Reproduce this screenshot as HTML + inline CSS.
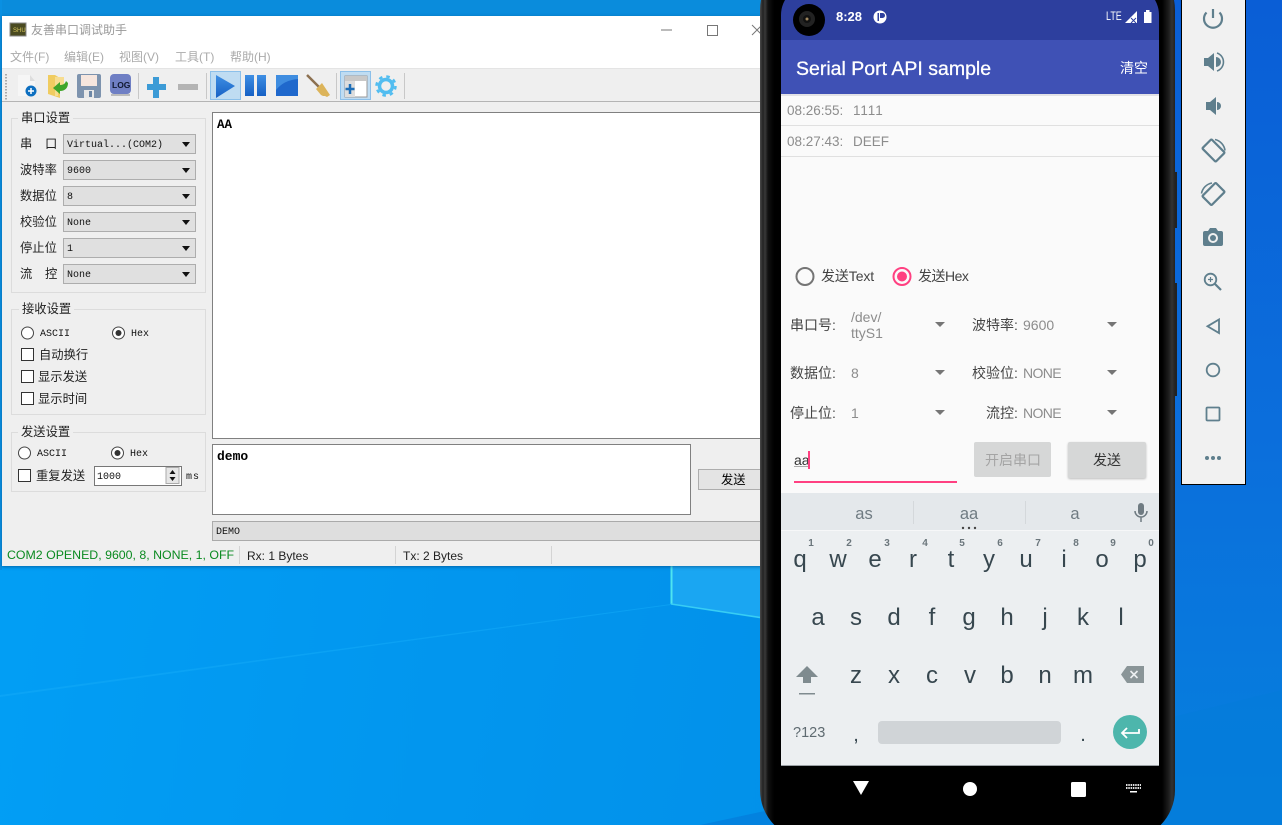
<!DOCTYPE html>
<html><head><meta charset="utf-8"><style>
*{box-sizing:border-box}
html,body{margin:0;padding:0;width:1282px;height:825px;overflow:hidden}
body{position:relative;font-family:"Liberation Sans","Noto Sans CJK SC",sans-serif;background:linear-gradient(100deg,#02a0f6 0,#0296ee 40%,#028fe8 75%)}
div,span,svg{position:absolute}
.t{white-space:nowrap;line-height:16px}
.cn{font-size:12.3px;color:#222;font-family:"Liberation Sans","Noto Sans CJK SC",sans-serif}
.m{font-family:"Liberation Mono","Noto Sans CJK SC",monospace;font-size:10px;color:#111}
.combo{left:63px;width:133px;height:20px;background:#e0e0e0;border:1px solid #adadad}
.combo span{left:3px;top:1px}
.combo i{position:absolute;right:5px;top:7px;width:0;height:0;border-left:4px solid transparent;border-right:4px solid transparent;border-top:5px solid #111}
.grp{left:11px;width:195px;border:1px solid #dcdcdc}
.gt{background:#efefef;padding:0 3px;font-size:12.3px;color:#222;white-space:nowrap;line-height:16px}
.cb{width:13px;height:13px;border:1px solid #333;background:#fff}
.k{font-size:24px;color:#37474f;transform:translateX(-50%);line-height:26px;white-space:nowrap}
.d{font-size:10px;color:#6b767c;transform:translateX(-50%);line-height:12px;font-weight:bold}
.lb{font-size:14px;color:#444;line-height:18px;white-space:nowrap}
.v{font-size:14px;color:#8c8c8c;line-height:16px;white-space:nowrap}
.ar{width:0;height:0;border-left:5px solid transparent;border-right:5px solid transparent;border-top:5px solid #757575}
</style></head><body>

<svg style="left:0;top:0" width="1282" height="825" viewBox="0 0 1282 825">
<defs>
<linearGradient id="bgR" x1="0" y1="0" x2="0" y2="1"><stop offset="0" stop-color="#0a5ed6"/><stop offset=".55" stop-color="#0b6fdc"/><stop offset="1" stop-color="#0581de"/></linearGradient>
</defs>
<rect x="0" y="0" width="770" height="30" fill="#0a8cdc"/>
<rect x="0" y="0" width="2" height="570" fill="#0a90e2"/>
<rect x="1160" y="0" width="122" height="825" fill="url(#bgR)"/>
<polygon points="700,825 1282,825 1282,690 1000,760" fill="#047cda" opacity=".7"/>
<polygon points="671,566 770,566 770,619 671,604" fill="#1aa6f2"/>
<polygon points="0,695 671,604 671,605 0,697" fill="#12a8f6" opacity=".6"/>
<line x1="671.5" y1="566" x2="671.5" y2="604" stroke="#4fe4f0" stroke-width="2"/>
<line x1="671" y1="604" x2="770" y2="619" stroke="#38cdf4" stroke-width="1.500"/>
</svg>

<!-- Window -->
<div style="left:2px;top:16px;width:762px;height:550px;background:#efefef;box-shadow:0 1px 3px rgba(0,50,100,.5)">
<div style="left:0;top:0;width:762px;height:52px;background:#fff"></div>
<div style="left:0;top:52px;width:762px;height:1px;background:#e4e4e4"></div>
<div style="left:0;top:85px;width:762px;height:1px;background:#b4b4b4"></div>
</div>
<svg style="left:0;top:0" width="770" height="110" viewBox="0 0 770 110">
<defs>
<linearGradient id="bl" x1="0" y1="0" x2="0" y2="1"><stop offset="0" stop-color="#3f8fe4"/><stop offset="1" stop-color="#1660c4"/></linearGradient>
</defs>
<rect x="10" y="23" width="16" height="13" fill="#4a4a20" stroke="#888" />
<text x="13" y="32" font-size="6" fill="#d8c860" font-family="Liberation Sans">SHU</text>
<line x1="661" y1="30" x2="672" y2="30" stroke="#777"/>
<rect x="707.500" y="25.500" width="10" height="10" fill="none" stroke="#777"/>
<path d="M752 25l10 10M762 25l-10 10" stroke="#777"/>
<path d="M6 74v26" stroke="#aaa" stroke-width="2" stroke-dasharray="1.500 1.500"/>
<path d="M138.500 73v26M206.500 73v26M336.500 73v26M404.500 73v26" stroke="#c8c8c8"/>
<!-- new doc -->
<path d="M18 75h12l5 6v15H18z" fill="#f6f6f6"/><path d="M30 75l5 6h-5z" fill="#ddd"/>
<circle cx="31" cy="91" r="5.500" fill="#0d6fc0"/><path d="M31 88v6M28 91h6" stroke="#fff" stroke-width="1.500"/>
<!-- folder -->
<path d="M48 75h7l5 3v20l-12-4z" fill="#f0cc60"/><path d="M55 77h9v8l-6 4v7h-3z" fill="#f7dd90"/>
<path d="M68 83c0 5-3 8-8 8v3l-7-6 7-6v3c3 0 5-1 6-4z" fill="#3fa52a"/>
<!-- save -->
<rect x="77" y="74" width="24" height="24" rx="2" fill="#7d93ae"/><rect x="81" y="75" width="16" height="11" fill="#f6e6de"/><rect x="84" y="90" width="10" height="8" fill="#e8e8e8"/><rect x="89" y="91" width="3" height="6" fill="#6d87a6"/>
<!-- log -->
<rect x="110" y="74" width="21" height="20" rx="4" fill="#6f7fc4"/><rect x="111" y="94" width="19" height="2" fill="#bbb"/>
<text x="112" y="88" font-size="8.500" font-weight="bold" fill="#101830" font-family="Liberation Sans">LOG</text>
<!-- plus -->
<path d="M153 77h6v7h7v6h-7v8h-6v-8h-6v-6h6z" fill="#3c9bd6"/>
<rect x="178" y="84" width="20" height="6" fill="#b4b4b4"/>
<!-- hl -->
<rect x="210.500" y="71.500" width="30" height="28" fill="#bfdcf2" stroke="#8cc0ea"/>
<path d="M216 75l19 11-19 12z" fill="url(#bl)"/>
<rect x="245" y="75" width="9" height="21" fill="url(#bl)"/><rect x="257" y="75" width="9" height="21" fill="url(#bl)"/>
<rect x="276" y="75" width="22" height="21" fill="#1f68cc"/><path d="M276 90q8-10 22-11V75h-22z" fill="#3f8de0"/>
<!-- broom -->
<path d="M307 75l13 13" stroke="#8c7050" stroke-width="2.500"/><path d="M316 89l6-6 8 12-3 2-2-1-2 0-2-1z" fill="#dcb45a"/>
<!-- window add -->
<rect x="340.500" y="71.500" width="30" height="28" fill="#bfdcf2" stroke="#8cc0ea"/>
<rect x="345" y="76" width="22" height="21" fill="#fff" stroke="#999"/><rect x="345" y="76" width="22" height="5" fill="#c8c8c8"/><rect x="345" y="81" width="10" height="16" fill="#ddd"/>
<path d="M350 84v10M345.500 89h9" stroke="#1e6fb8" stroke-width="2.500"/>
<!-- gear -->
<circle cx="386" cy="86" r="6.500" fill="none" stroke="#52bdf0" stroke-width="3.500"/>
<circle cx="386" cy="86" r="9.500" fill="none" stroke="#52bdf0" stroke-width="2.500" stroke-dasharray="3.500 3.960"/>
</svg>
<span class="t" style="left:31px;top:22px;font-size:12px;color:#999">友善串口调试助手</span>
<span class="t" style="left:10px;top:49px;font-size:12px;color:#aaa">文件(F)</span>
<span class="t" style="left:64px;top:49px;font-size:12px;color:#aaa">编辑(E)</span>
<span class="t" style="left:119px;top:49px;font-size:12px;color:#aaa">视图(V)</span>
<span class="t" style="left:175px;top:49px;font-size:12px;color:#aaa">工具(T)</span>
<span class="t" style="left:230px;top:49px;font-size:12px;color:#aaa">帮助(H)</span>

<!-- serial group -->
<div class="grp" style="top:118px;height:175px"></div>
<span class="gt" style="left:18px;top:110px">串口设置</span>
<span class="t cn" style="left:20px;top:136px">串</span><span class="t cn" style="left:45px;top:136px">口</span>
<span class="t cn" style="left:20px;top:162px">波特率</span>
<span class="t cn" style="left:20px;top:188px">数据位</span>
<span class="t cn" style="left:20px;top:214px">校验位</span>
<span class="t cn" style="left:20px;top:240px">停止位</span>
<span class="t cn" style="left:20px;top:266px">流</span><span class="t cn" style="left:45px;top:266px">控</span>
<div class="combo" style="top:134px"><span class="t m" style="top:1px">Virtual...(COM2)</span><i></i></div>
<div class="combo" style="top:160px"><span class="t m" style="top:1px">9600</span><i></i></div>
<div class="combo" style="top:186px"><span class="t m" style="top:1px">8</span><i></i></div>
<div class="combo" style="top:212px"><span class="t m" style="top:1px">None</span><i></i></div>
<div class="combo" style="top:238px"><span class="t m" style="top:1px">1</span><i></i></div>
<div class="combo" style="top:264px"><span class="t m" style="top:1px">None</span><i></i></div>
<style>.combo span.m{top:3px!important;left:3px}</style>

<!-- receive group -->
<div class="grp" style="top:309px;height:106px"></div>
<span class="gt" style="left:19px;top:301px">接收设置</span>
<svg style="left:0;top:320px" width="210" height="150" viewBox="0 320 210 150">
<circle cx="27.500" cy="333" r="6" fill="#fff" stroke="#444"/>
<circle cx="118.500" cy="333" r="6" fill="#fff" stroke="#444"/><circle cx="118.500" cy="333" r="3" fill="#333"/>
<circle cx="24.500" cy="453" r="6" fill="#fff" stroke="#444"/>
<circle cx="117.500" cy="453" r="6" fill="#fff" stroke="#444"/><circle cx="117.500" cy="453" r="3" fill="#333"/>
</svg>
<span class="t m" style="left:40px;top:327px">ASCII</span>
<span class="t m" style="left:131px;top:327px">Hex</span>
<div class="cb" style="left:21px;top:348px"></div><span class="t cn" style="left:39px;top:347px">自动换行</span>
<div class="cb" style="left:21px;top:370px"></div><span class="t cn" style="left:38px;top:369px">显示发送</span>
<div class="cb" style="left:21px;top:392px"></div><span class="t cn" style="left:38px;top:391px">显示时间</span>

<!-- send group -->
<div class="grp" style="top:432px;height:60px"></div>
<span class="gt" style="left:18px;top:424px">发送设置</span>
<span class="t m" style="left:37px;top:447px">ASCII</span>
<span class="t m" style="left:130px;top:447px">Hex</span>
<div class="cb" style="left:18px;top:469px"></div><span class="t cn" style="left:36px;top:468px">重复发送</span>
<div style="left:94px;top:466px;width:88px;height:20px;background:#fff;border:1px solid #777"></div>
<span class="t m" style="left:97px;top:470px">1000</span>
<svg style="left:165px;top:467px" width="16" height="18"><rect x="1" y="0.500" width="13" height="16" fill="#e6e6e6" stroke="#aaa"/><path d="M7.500 3l3 4h-6zM7.500 14l3-4h-6z" fill="#111"/></svg>
<span class="t m" style="left:186px;top:470px;letter-spacing:1px">ms</span>

<!-- text areas -->
<div style="left:212px;top:112px;width:560px;height:327px;background:#fff;border:1px solid #808080"></div>
<span class="t" style="left:217px;top:117px;font:bold 12.500px/16px 'Liberation Mono',monospace;color:#000">AA</span>
<div style="left:212px;top:444px;width:479px;height:71px;background:#fff;border:1px solid #808080"></div>
<span class="t" style="left:217px;top:449px;font:bold 13px/16px 'Liberation Mono',monospace;color:#000">demo</span>
<div style="left:698px;top:469px;width:70px;height:21px;background:#e4e4e4;border:1px solid #adadad"></div>
<span class="t cn" style="left:721px;top:472px;color:#000">发送</span>
<div style="left:212px;top:521px;width:560px;height:20px;background:#dedede;border:1px solid #aaa"></div>
<span class="t m" style="left:216px;top:525px">DEMO</span>

<!-- status -->
<span class="t" style="left:7px;top:547px;font-size:12.350px;color:#0a8a20">COM2 OPENED, 9600, 8, NONE, 1, OFF</span>
<div style="left:239px;top:546px;width:1px;height:18px;background:#d4d4d4"></div>
<span class="t" style="left:247px;top:548px;font-size:12px;color:#222">Rx: 1 Bytes</span>
<div style="left:395px;top:546px;width:1px;height:18px;background:#d4d4d4"></div>
<span class="t" style="left:403px;top:548px;font-size:12px;color:#222">Tx: 2 Bytes</span>
<div style="left:551px;top:546px;width:1px;height:18px;background:#d4d4d4"></div>

<!-- Phone -->
<div style="left:1175px;top:172px;width:2px;height:56px;background:#222"></div>
<div style="left:1175px;top:283px;width:2px;height:113px;background:#222"></div>
<div style="left:760px;top:-40px;width:415px;height:880px;border-radius:50px;background:linear-gradient(90deg,#4a4a4a 0,#222 3px,#3a3a3a 5px,#111 8px,#000 14px,#000 402px,#1a1a1a 408px,#333 412px,#222 415px)"></div>
<div style="left:781px;top:-15px;width:378px;height:827px;background:#000;border-radius:30px 30px 34px 34px;overflow:hidden">
  <div style="left:0;top:0;width:378px;height:55px;background:#2d3f9e"></div>
  <div style="left:0;top:55px;width:378px;height:54px;background:#3f51b5"></div>
  <div style="left:0;top:109px;width:378px;height:399px;background:#fafafa"></div>
  <div style="left:0;top:109px;width:378px;height:2px;background:#e2e2e6"></div>
  <div style="left:0;top:140px;width:378px;height:1px;background:#e0e0e0"></div>
  <div style="left:0;top:171px;width:378px;height:1px;background:#e0e0e0"></div>
  <div style="left:0;top:508px;width:378px;height:37px;background:#e4e8eb"></div>
  <div style="left:0;top:545px;width:378px;height:236px;background:#eceff1;border-top:1px solid #f6f7f8"></div>
  <div style="left:0;top:780px;width:378px;height:1px;background:#9aa0a4"></div>
</div>

<svg style="left:781px;top:0" width="378" height="40" viewBox="781 0 378 40">
<circle cx="809" cy="20" r="16" fill="#000"/><circle cx="807" cy="19" r="8" fill="#222"/><circle cx="807" cy="19" r="4" fill="#111"/><circle cx="807" cy="19" r="1.500" fill="#a08860"/>
<circle cx="880" cy="17" r="6.500" fill="#fff"/><path d="M880 13h2.500a2.500 2.500 0 0 1 0 5H880z" fill="#2d3f9e"/><rect x="877.500" y="13" width="1.500" height="8" fill="#2d3f9e"/>
<path d="M1137 11v12h-12z" fill="#fff"/><path d="M1131 18l5 5M1136 18l-5 5" stroke="#2d3f9e" stroke-width="1"/>
<rect x="1144" y="12" width="7.500" height="11" fill="#fff"/><rect x="1146" y="10" width="3.500" height="2" fill="#fff"/>
</svg>
<span class="t" style="left:836px;top:9px;font-size:13px;color:#fff;font-weight:bold">8:28</span>
<span class="t" style="left:1106px;top:9px;font-size:11.500px;color:#fff;transform:scaleX(.78);transform-origin:0 0">LTE</span>
<span class="t" style="left:796px;top:57px;font-size:19.500px;line-height:24px;color:#fff;-webkit-text-stroke:.3px #fff">Serial Port API sample</span>
<span class="t" style="left:1120px;top:60px;font-size:14px;color:#fff">清空</span>

<span class="t" style="left:787px;top:103px;font-size:13.500px;color:#8c8c8c">08:26:55:</span>
<span class="t" style="left:853px;top:103px;font-size:13.500px;color:#8c8c8c;letter-spacing:.9px">1111</span>
<span class="t" style="left:787px;top:134px;font-size:13.500px;color:#8c8c8c">08:27:43:</span>
<span class="t" style="left:853px;top:134px;font-size:13.500px;color:#8c8c8c">DEEF</span>

<svg style="left:781px;top:260px" width="378" height="40" viewBox="781 260 378 40">
<circle cx="805" cy="276.500" r="8.500" fill="none" stroke="#757575" stroke-width="2"/>
<circle cx="902" cy="276.500" r="8.500" fill="none" stroke="#ff4081" stroke-width="2"/><circle cx="902" cy="276.500" r="5" fill="#ff4081"/>
</svg>
<span class="lb" style="left:821px;top:267px;letter-spacing:-.1px">发送Text</span>
<span class="lb" style="left:918px;top:267px;letter-spacing:-.5px">发送Hex</span>

<span class="lb" style="left:790px;top:316px">串口号:</span>
<span class="v" style="left:851px;top:309px">/dev/</span><span class="v" style="left:851px;top:325px">ttyS1</span>
<div class="ar" style="left:935px;top:322px"></div>
<span class="lb" style="left:972px;top:316px">波特率:</span>
<span class="v" style="left:1023px;top:317px">9600</span>
<div class="ar" style="left:1107px;top:322px"></div>

<span class="lb" style="left:790px;top:364px">数据位:</span>
<span class="v" style="left:851px;top:365px">8</span>
<div class="ar" style="left:935px;top:370px"></div>
<span class="lb" style="left:972px;top:364px">校验位:</span>
<span class="v" style="left:1023px;top:365px;letter-spacing:-.6px">NONE</span>
<div class="ar" style="left:1107px;top:370px"></div>

<span class="lb" style="left:790px;top:404px">停止位:</span>
<span class="v" style="left:851px;top:405px">1</span>
<div class="ar" style="left:935px;top:410px"></div>
<span class="lb" style="left:986px;top:404px">流控:</span>
<span class="v" style="left:1023px;top:405px;letter-spacing:-.6px">NONE</span>
<div class="ar" style="left:1107px;top:410px"></div>

<span class="lb" style="left:794px;top:451px;color:#333">aa</span>
<div style="left:794px;top:466px;width:14px;height:1px;background:#aaa"></div>
<div style="left:808px;top:451px;width:2px;height:18px;background:#ff4081"></div>
<div style="left:794px;top:481px;width:163px;height:2px;background:#ff4081"></div>
<div style="left:974px;top:442px;width:77px;height:35px;background:#d6d7d7;border-radius:2px"></div>
<span class="lb" style="left:985px;top:451px;color:#a4a4a4">开启串口</span>
<div style="left:1068px;top:442px;width:78px;height:36px;background:#d6d7d7;border-radius:2px;box-shadow:0 1px 2px rgba(0,0,0,.25)"></div>
<span class="lb" style="left:1093px;top:451px;color:#333">发送</span>

<!-- suggestions -->
<span class="k" style="left:864px;top:501px;font-size:16.500px;color:#6f7b82">as</span>
<span class="k" style="left:969px;top:501px;font-size:16.500px;color:#6f7b82">aa</span>
<span class="k" style="left:1075px;top:501px;font-size:16.500px;color:#6f7b82">a</span>
<div style="left:913px;top:501px;width:1px;height:23px;background:#d4d8db"></div>
<div style="left:1025px;top:501px;width:1px;height:23px;background:#d4d8db"></div>
<svg style="left:960px;top:495px" width="195" height="40" viewBox="960 495 195 40">
<circle cx="963" cy="528" r="1.200" fill="#444"/><circle cx="969" cy="528" r="1.200" fill="#444"/><circle cx="975" cy="528" r="1.200" fill="#444"/>
<rect x="1138" y="503" width="6" height="12" rx="3" fill="#6f7b82"/><path d="M1135 511a6 6 0 0 0 12 0M1141 517v5" fill="none" stroke="#6f7b82" stroke-width="1.500"/>
</svg>

<!-- keys -->
<span class="d" style="left:811px;top:538px">1</span><span class="d" style="left:849px;top:538px">2</span><span class="d" style="left:887px;top:538px">3</span><span class="d" style="left:925px;top:538px">4</span><span class="d" style="left:962px;top:538px">5</span><span class="d" style="left:1000px;top:538px">6</span><span class="d" style="left:1038px;top:538px">7</span><span class="d" style="left:1076px;top:538px">8</span><span class="d" style="left:1113px;top:538px">9</span><span class="d" style="left:1151px;top:538px">0</span>
<span class="k" style="left:800px;top:547px">q</span><span class="k" style="left:838px;top:547px">w</span><span class="k" style="left:875px;top:547px">e</span><span class="k" style="left:913px;top:547px">r</span><span class="k" style="left:951px;top:547px">t</span><span class="k" style="left:989px;top:547px">y</span><span class="k" style="left:1026px;top:547px">u</span><span class="k" style="left:1064px;top:547px">i</span><span class="k" style="left:1102px;top:547px">o</span><span class="k" style="left:1140px;top:547px">p</span>
<span class="k" style="left:818px;top:605px">a</span><span class="k" style="left:856px;top:605px">s</span><span class="k" style="left:894px;top:605px">d</span><span class="k" style="left:932px;top:605px">f</span><span class="k" style="left:969px;top:605px">g</span><span class="k" style="left:1007px;top:605px">h</span><span class="k" style="left:1045px;top:605px">j</span><span class="k" style="left:1083px;top:605px">k</span><span class="k" style="left:1121px;top:605px">l</span>
<span class="k" style="left:856px;top:663px">z</span><span class="k" style="left:894px;top:663px">x</span><span class="k" style="left:932px;top:663px">c</span><span class="k" style="left:970px;top:663px">v</span><span class="k" style="left:1007px;top:663px">b</span><span class="k" style="left:1045px;top:663px">n</span><span class="k" style="left:1083px;top:663px">m</span>
<span class="t" style="left:793px;top:725px;font-size:14.500px;color:#5f6b71">?123</span>
<span class="k" style="left:856px;top:722px;font-size:20px">,</span>
<span class="k" style="left:1083px;top:722px;font-size:20px">.</span>
<div style="left:878px;top:721px;width:183px;height:23px;background:#d0d4d7;border-radius:4px"></div>

<svg style="left:781px;top:650px" width="378" height="175" viewBox="781 650 378 175">
<path d="M807 666l11 11h-7v6h-8v-6h-7z" fill="#7f8b8f"/>
<rect x="799" y="693" width="16" height="1.500" fill="#7f8b8f"/>
<path d="M1127 666h17v17h-17l-6-8.500z" fill="#8a9598"/><path d="M1129 671l7 7M1136 671l-7 7" stroke="#eceff1" stroke-width="1.600" transform="translate(1.500 0)"/>
<circle cx="1130" cy="732" r="17" fill="#4db6ac"/>
<path d="M1139 729v4h-16M1127 728l-5 5 5 5" fill="none" stroke="#fff" stroke-width="1.800"/>
<path d="M853 788h16l-8 14z" fill="#fff" transform="translate(0 -7)"/>
<circle cx="970" cy="789" r="7" fill="#fff"/>
<rect x="1071" y="782" width="15" height="15" rx="1.500" fill="#fff"/>
<path d="M1126 785h15M1126 788h15" stroke="#fff" stroke-width="1.800" stroke-dasharray="1.500 .8"/><rect x="1130" y="791" width="7" height="1.500" fill="#fff"/>
</svg>

<!-- side panel -->
<div style="left:1181px;top:-2px;width:65px;height:487px;background:#f1f1f1;border:1px solid #000"></div>
<svg style="left:1182px;top:0" width="63" height="484" viewBox="1182 0 63 484" fill="#5f7f8d">
<!-- power -->
<path d="M1213 9v9" stroke="#5f7f8d" stroke-width="2.200" fill="none"/><path d="M1206.500 12.500a9 9 0 1 0 13 0" stroke="#5f7f8d" stroke-width="2.200" fill="none"/>
<!-- vol up -->
<path d="M1204 58h4l6-5v18l-6-5h-4z"/><path d="M1216 57a5 5 0 0 1 0 10z"/><path d="M1217 53a9.500 9.500 0 0 1 0 18" fill="none" stroke="#5f7f8d" stroke-width="1.600"/>
<!-- vol down -->
<path d="M1206 102h4l6-5v18l-6-5h-4z"/><path d="M1217 102a4 4 0 0 1 0 8z"/>
<!-- rotate -->
<g fill="none" stroke="#5f7f8d" stroke-width="2.200">
<rect x="1204" y="144" width="19" height="13" rx="1" transform="rotate(45 1213.500 150.500)"/>
<path d="M1215 139.500a13 13 0 0 1 10 11" stroke-width="1.600"/>
<rect x="1204" y="187.500" width="19" height="13" rx="1" transform="rotate(-45 1213.500 194)"/>
<path d="M1212 183a13 13 0 0 0-10.500 10.500" stroke-width="1.600"/>
</g>
<!-- camera -->
<path d="M1205 231h3l2-3h6l2 3h3a2 2 0 0 1 2 2v11a2 2 0 0 1-2 2h-16a2 2 0 0 1-2-2v-11a2 2 0 0 1 2-2z"/>
<circle cx="1213" cy="238" r="5" fill="#f1f1f1"/><circle cx="1213" cy="238" r="3"/>
<!-- zoom -->
<g fill="none" stroke="#5f7f8d" stroke-width="1.800">
<circle cx="1210.500" cy="279.500" r="5.800"/><path d="M1215 284l6 6" stroke-width="2.200"/><path d="M1210.500 277v5M1208 279.500h5" stroke-width="1.200"/>
<path d="M1219 319.500v13.500l-11.500-6.700z"/>
<circle cx="1213" cy="370" r="6.300"/>
<rect x="1206.500" y="407.500" width="13" height="13" rx="1"/>
</g>
<circle cx="1207" cy="458" r="2"/><circle cx="1213" cy="458" r="2"/><circle cx="1219" cy="458" r="2"/>
</svg>
</body></html>
